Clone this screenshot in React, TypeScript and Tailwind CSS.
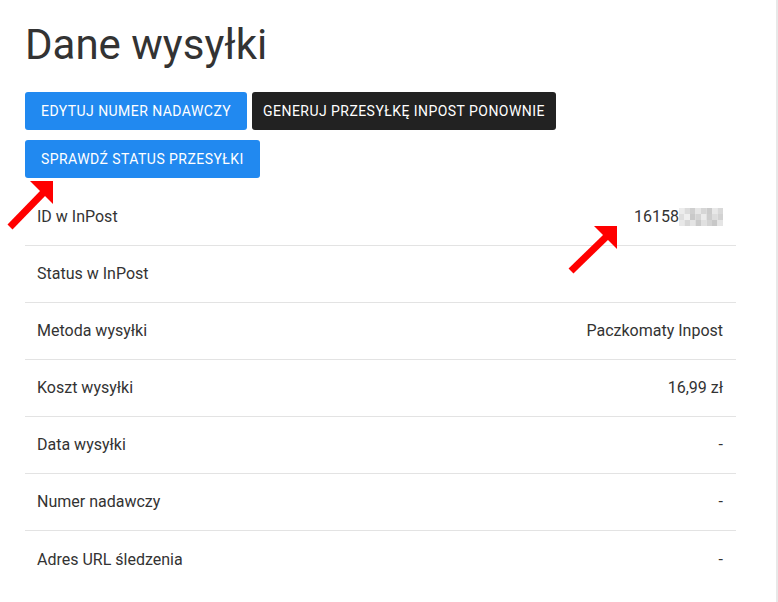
import React from 'react';

const rows: { label: string; value: React.ReactNode }[] = [
  { label: 'ID w InPost', value: <IdValue /> },
  { label: 'Status w InPost', value: '' },
  { label: 'Metoda wysyłki', value: 'Paczkomaty Inpost' },
  { label: 'Koszt wysyłki', value: '16,99 zł' },
  { label: 'Data wysyłki', value: '-' },
  { label: 'Numer nadawczy', value: '-' },
  { label: 'Adres URL śledzenia', value: '-' },
];

function IdValue() {
  // pixelated (censored) part of the id
  const cells = [
    ['#ececec', '#dcdcdc', '#cfcfcf', '#e6e6e6', '#d6d6d6', '#cbcbcb', '#e8e8e8', '#d9d9d9'],
    ['#dfdfdf', '#efefef', '#c9c9c9', '#d4d4d4', '#ebebeb', '#cdcdcd', '#dddddd', '#d2d2d2'],
    ['#e8e8e8', '#d7d7d7', '#e4e4e4', '#cacaca', '#e0e0e0', '#d3d3d3', '#c8c8c8', '#e5e5e5'],
  ];
  return (
    <span className="inline-flex items-center">
      <span>16158</span>
      <svg width="44" height="18" viewBox="0 0 44 18" className="block">
        {cells.map((row, r) =>
          row.map((c, i) => (
            <rect key={`${r}-${i}`} x={i * 5.5} y={r * 6} width="5.5" height="6" fill={c} />
          ))
        )}
      </svg>
    </span>
  );
}

function Arrows() {
  return (
    <svg className="absolute inset-0 pointer-events-none" width="778" height="602">
      <line x1="10" y1="227" x2="44" y2="192" stroke="#ff0000" strokeWidth="7" />
      <polygon points="30,181 53,181 53,204" fill="#ff0000" />
      <line x1="571" y1="271" x2="606" y2="237" stroke="#ff0000" strokeWidth="7" />
      <polygon points="594,226 617,226 617,249" fill="#ff0000" />
    </svg>
  );
}

export default function App() {
  return (
    <div
      className="relative w-[778px] h-[602px] bg-white border-r-2 border-[#e8e8e8] overflow-hidden text-[#333333]"
      style={{ fontFamily: 'Roboto, "Noto Sans", sans-serif' }}
    >
      <div className="pl-[25px] pt-[20px] w-[736px]">
        <h1 className="text-[42px] leading-[50px] font-normal text-[#333333]">Dane wysyłki</h1>

        <div className="mt-[22px] flex flex-wrap gap-x-[5px] gap-y-[10px]">
          <button className="h-[38px] px-[16px] rounded-[3px] bg-[#2189f0] text-white text-[14px] uppercase tracking-[0.45px]">
            Edytuj numer nadawczy
          </button>
          <button className="h-[38px] px-[11px] rounded-[3px] bg-[#222222] text-white text-[14px] uppercase tracking-[0.45px]">
            Generuj przesyłkę InPost ponownie
          </button>
          <button className="h-[38px] px-[16px] rounded-[3px] bg-[#2189f0] text-white text-[14px] uppercase tracking-[0.45px]">
            Sprawdź status przesyłki
          </button>
        </div>

        <div className="mt-[11px]">
          {rows.map((row, i) => (
            <div
              key={row.label}
              className={`flex items-center justify-between h-[57px] pl-[12px] pr-[13px] text-[16px] ${
                i < rows.length - 1 ? 'border-b border-[#e3e3e3]' : ''
              }`}
            >
              <span>{row.label}</span>
              <span>{row.value}</span>
            </div>
          ))}
        </div>
      </div>
      <Arrows />
    </div>
  );
}
